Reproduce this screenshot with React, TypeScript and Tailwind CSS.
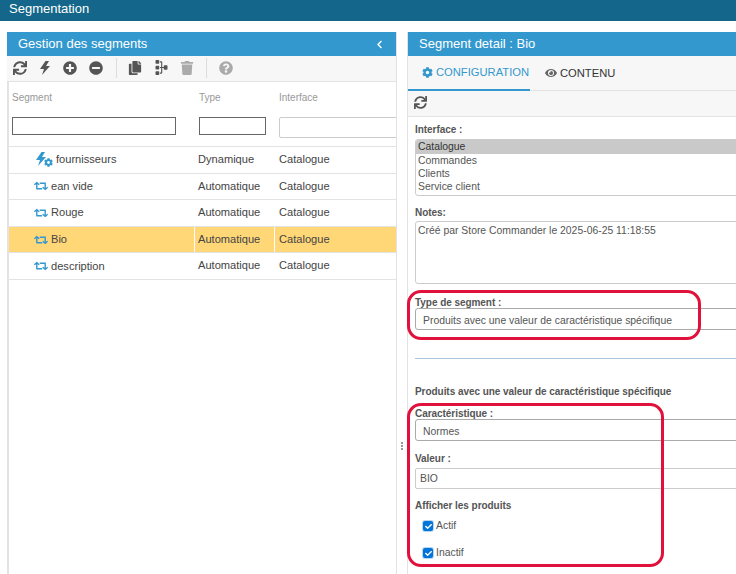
import { FaSync, FaPlusCircle, FaMinusCircle, FaCopy, FaSitemap, FaTrash, FaQuestionCircle, FaRetweet, FaCog, FaEye, FaChevronLeft, FaCheck } from "react-icons/fa";

const rows = [
  { name: "fournisseurs", type: "Dynamique", dynamic: true },
  { name: "ean vide", type: "Automatique" },
  { name: "Rouge", type: "Automatique" },
  { name: "Bio", type: "Automatique", selected: true },
  { name: "description", type: "Automatique" },
];

function Bolt({ className }: { className?: string }) {
  return (
    <svg viewBox="0 0 12 14" className={className} fill="currentColor">
      <path d="M6.5 0 L1 8 H5 L3 14 L11 5 H7 L10 0 Z" />
    </svg>
  );
}

function Check({ label }: { label: string }) {
  return (
    <div className="flex items-center h-[14px] pl-[8px] gap-[3px] text-[10.4px] text-[#555]">
      <span className="w-[10px] h-[10px] rounded-[2px] bg-[#0075d9] flex items-center justify-center ring-1 ring-[#b9d6ef]">
        <FaCheck className="text-white text-[7px]" />
      </span>
      <span>{label}</span>
    </div>
  );
}

const labelCls = "font-bold text-[#555] text-[10px] tracking-[-0.05px] leading-[13px]";

export default function App() {
  return (
    <div className="relative w-[736px] h-[574px] overflow-hidden bg-white text-[#444] font-['Liberation_Sans',Arial,sans-serif]">
      <div className="h-[21px] bg-[#14678a] text-white text-[13px] pl-[9px] leading-[17px]">Segmentation</div>
      <div className="flex h-[553px] pt-[11px] pl-[7px]">
        {/* Left panel */}
        <div className="w-[390px] shrink-0 flex flex-col border-r border-[#e3e3e3] overflow-hidden">
          <div className="h-[24px] shrink-0 bg-[#3398ce] text-white text-[13px] pl-[11px] pr-[12px] flex items-center justify-between">
            <span>Gestion des segments</span>
            <FaChevronLeft className="text-[9px]" />
          </div>
          <div className="h-[26px] shrink-0 bg-[#f7f7f7] flex items-center pl-[6px] pb-[2px] text-[#555] border-b border-[#e3e3e3]">
            <div className="flex items-center gap-[12px] text-[14px]">
              <FaSync />
              <Bolt className="w-[12px] h-[14px]" />
              <FaPlusCircle />
              <FaMinusCircle />
            </div>
            <div className="w-px h-[20px] bg-[#ddd] ml-[13px] mr-[11px]" />
            <div className="flex items-center gap-[11px] text-[14px]">
              <FaCopy />
              <FaSitemap className="rotate-90 w-[15px] h-[15px] ml-[1px]" />
              <FaTrash className="text-[#aaa]" />
            </div>
            <div className="w-px h-[20px] bg-[#ddd] ml-[12px] mr-[12px]" />
            <FaQuestionCircle className="text-[14px] text-[#aaa]" />
          </div>
          <div className="flex-1 border-l-2 border-[#e3e3e3] min-h-0">
            <div className="grid grid-cols-[186px_80px_122px] h-[65px] border-b border-[#e3e3e3] text-[10px] text-[#999]">
              <div className="pl-[3px] pt-[8px]">
                <div className="h-[27px]">Segment</div>
                <div className="w-[164px] h-[18px] border border-[#666]" />
              </div>
              <div className="pl-[4px] pt-[8px]">
                <div className="h-[27px]">Type</div>
                <div className="w-[67px] h-[18px] border border-[#666]" />
              </div>
              <div className="pl-[4px] pt-[8px]">
                <div className="h-[27px]">Interface</div>
                <div className="w-[125px] h-[21px] border border-[#ccc] rounded-[2px]" />
              </div>
            </div>
            {rows.map((r) => (
              <div
                key={r.name}
                className={`grid grid-cols-[186px_80px_122px] h-[26.6px] border-b border-[#e3e3e3] text-[11.1px] leading-[25px] ${r.selected ? "bg-[#ffd777]" : ""}`}
              >
                <div className={`flex items-center ${r.dynamic ? "pl-[26px] gap-[3px]" : "pl-[25px] gap-[3px]"} ${r.selected ? "border-r border-white" : ""}`}>
                  {r.dynamic ? (
                    <span className="relative w-[18px] h-[15px] text-[#3398ce]">
                      <Bolt className="absolute left-0 top-0 w-[12px] h-[14px]" />
                      <FaCog className="absolute right-0 bottom-0 text-[9px]" />
                    </span>
                  ) : (
                    <FaRetweet className="text-[14px] text-[#3398ce]" />
                  )}
                  <span>{r.name}</span>
                </div>
                <div className={`pl-[3px] ${r.selected ? "border-r border-white" : ""}`}>{r.type}</div>
                <div className="pl-[4px]">Catalogue</div>
              </div>
            ))}
          </div>
        </div>

        {/* Gutter */}
        <div className="relative w-[11px] shrink-0">
          <div className="absolute left-[4px] top-[410px] flex flex-col gap-[1px]">
            <span className="w-[2px] h-[2px] bg-[#999]" />
            <span className="w-[2px] h-[2px] bg-[#999]" />
            <span className="w-[2px] h-[2px] bg-[#999]" />
          </div>
        </div>

        {/* Right panel */}
        <div className="w-[340px] shrink-0 -ml-[1px] flex flex-col border-l border-[#e3e3e3]">
          <div className="h-[24px] shrink-0 bg-[#3398ce] text-white text-[13px] pl-[11px] flex items-center">Segment detail : Bio</div>
          <div className="h-[35px] shrink-0 bg-[#f7f7f7] flex text-[11.2px] border-b border-[#e3e3e3]">
            <div className="w-[122px] h-[35px] border-b-2 border-[#3398ce] text-[#3398ce] flex items-center pl-[14px] gap-[3px]">
              <FaCog className="text-[11px]" />
              <span>CONFIGURATION</span>
            </div>
            <div className="flex items-center gap-[3px] pl-[15px] text-[#333]">
              <FaEye className="text-[12px] text-[#666]" />
              <span>CONTENU</span>
            </div>
          </div>
          <div className="h-[26px] shrink-0 bg-[#f7f7f7] border-b border-[#e3e3e3] flex items-center pl-[6px] pb-[3px] text-[#555]">
            <FaSync className="text-[13px]" />
          </div>
          <div className="pl-[7px] flex flex-col text-[10.4px]">
            <div className={`${labelCls} h-[22px] pt-[6px]`}>Interface :</div>
            <div className="h-[57px] border border-[#ccc] rounded-[3px] leading-[13px] text-[#555] w-[400px] overflow-hidden">
              <div className="bg-[#c9c9c9] text-[#333] h-[14px] pl-[2px]">Catalogue</div>
              <div className="pl-[2px]">Commandes</div>
              <div className="pl-[2px]">Clients</div>
              <div className="pl-[2px]">Service client</div>
            </div>
            <div className={`${labelCls} h-[25px] pt-[10px]`}>Notes:</div>
            <div className="h-[63px] border border-[#ccc] rounded-[3px] pl-[2px] pt-[2px] text-[#555] w-[400px] leading-[13px]">Créé par Store Commander le 2025-06-25 11:18:55</div>
            <div className={`${labelCls} h-[24px] pt-[12px]`}>Type de segment :</div>
            <div className="h-[22px] border border-[#aaa] rounded-[3px] pl-[7px] text-[#555] w-[400px] leading-[23px]">Produits avec une valeur de caractéristique spécifique</div>
            <div className="mt-[28px] h-px bg-[#a9c4dc] w-[400px]" />
            <div className={`${labelCls} h-[40px] pt-[26px]`}>Produits avec une valeur de caractéristique spécifique</div>
            <div className={`${labelCls} h-[20px] pt-[8px]`}>Caractéristique :</div>
            <div className="h-[22px] border border-[#aaa] rounded-[3px] pl-[7px] text-[#555] w-[400px] leading-[23px]">Normes</div>
            <div className={`${labelCls} h-[27px] pt-[11px]`}>Valeur :</div>
            <div className="h-[21px] border border-[#ccc] rounded-[2px] pl-[4px] text-[#555] w-[400px] leading-[19px]">BIO</div>
            <div className={`${labelCls} h-[29px] pt-[10px]`}>Afficher les produits</div>
            <div className="flex flex-col gap-[13px] mt-[1px]">
              <Check label="Actif" />
              <Check label="Inactif" />
            </div>
          </div>
        </div>
      </div>

      {/* Red annotations */}
      <div className="absolute left-[407px] top-[290px] w-[294px] h-[50px] border-[3px] border-[#e0123c] rounded-[14px]" />
      <div className="absolute left-[407px] top-[403px] w-[257px] h-[164px] border-[3px] border-[#e0123c] rounded-[14px]" />
    </div>
  );
}
